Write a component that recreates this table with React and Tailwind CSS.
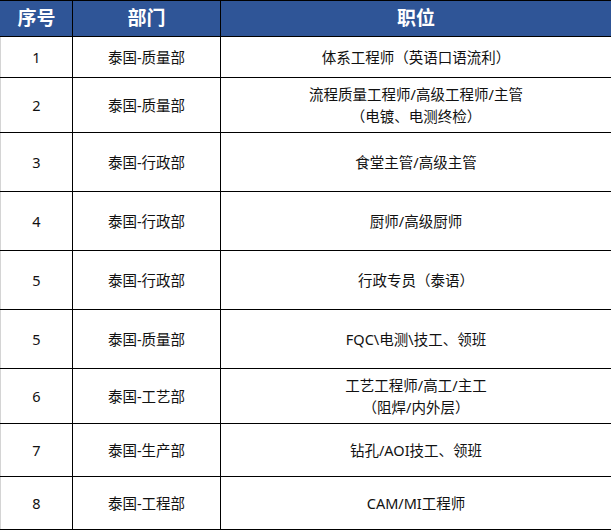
import React from "react";

const rows = [
  { no: "1", dept: "泰国-质量部", job: ["体系工程师（英语口语流利）"], h: "h-[41px]" },
  { no: "2", dept: "泰国-质量部", job: ["流程质量工程师/高级工程师/主管", "（电镀、电测终检）"], h: "h-[55px]" },
  { no: "3", dept: "泰国-行政部", job: ["食堂主管/高级主管"], h: "h-[59px]" },
  { no: "4", dept: "泰国-行政部", job: ["厨师/高级厨师"], h: "h-[59px]" },
  { no: "5", dept: "泰国-行政部", job: ["行政专员（泰语）"], h: "h-[59px]" },
  { no: "5", dept: "泰国-质量部", job: ["FQC\\电测\\技工、领班"], h: "h-[59px]" },
  { no: "6", dept: "泰国-工艺部", job: ["工艺工程师/高工/主工", "（阻焊/内外层）"], h: "h-[55px]" },
  { no: "7", dept: "泰国-生产部", job: ["钻孔/AOI技工、领班"], h: "h-[53px]" },
  { no: "8", dept: "泰国-工程部", job: ["CAM/MI工程师"], h: "h-[53px]" },
];

const App = () => {
  return (
    <div className="w-[611px] h-[531px] bg-white font-['Noto_Sans','Noto_Sans_CJK_SC',sans-serif]">
      <table className="w-[611px] table-fixed border-collapse text-center">
        <colgroup>
          <col className="w-[72px]" />
          <col className="w-[148px]" />
          <col className="w-[391px]" />
        </colgroup>
        <thead>
          <tr className="h-[36px] bg-[#2f5597] text-white text-[19px] font-bold">
            <th className="border border-black border-l-[#2f5597] p-0">序号</th>
            <th className="border border-black p-0">部门</th>
            <th className="border border-black p-0">职位</th>
          </tr>
        </thead>
        <tbody className="text-[14.5px] text-[#111] leading-[22px]">
          {rows.map((row, i) => (
            <tr key={i} className={row.h}>
              <td className="border border-black border-l-[#d4d4d4] p-0">{row.no}</td>
              <td className="border border-black p-0">{row.dept}</td>
              <td className="border border-black p-0">
                {row.job.map((line, j) => (
                  <div key={j}>{line}</div>
                ))}
              </td>
            </tr>
          ))}
        </tbody>
      </table>
    </div>
  );
};

export default App;
